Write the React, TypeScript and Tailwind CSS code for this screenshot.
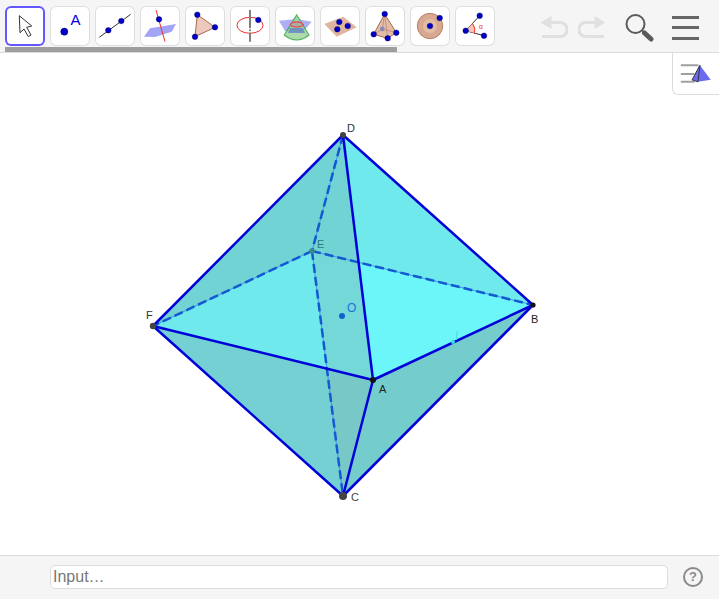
// Octahedron applet view: tool strip, 3D graphics view and input bar.

import type { ReactNode } from "react";

const BLUE = "#0000d8";
const DOT = "#0000c8";
const HIDDEN = "#1458d2";

// ---------------------------------------------------------------------------
// Toolbar icons
// ---------------------------------------------------------------------------

function Pt({ x, y, r = 2.8 }: { x: number; y: number; r?: number }) {
  return <circle cx={x} cy={y} r={r} fill={DOT} stroke="#000050" strokeWidth="0.4" />;
}

const toolIcons: ReactNode[] = [
  <path
    d="M14.3 9.7 L15 26.7 L19 23 L23.3 30.6 L26 29 L21.7 21.3 L26.7 20 Z"
    fill="#fff"
    stroke="#333"
    strokeWidth="1"
  />,
  <>
    <circle cx="14.3" cy="25.7" r="3.6" fill={DOT} stroke="#000050" strokeWidth="0.4" />
    <text x="20.5" y="19" fontSize="15" fill="#0000e0" fontFamily="Liberation Sans, sans-serif">
      A
    </text>
  </>,
  <>
    <path d="M4.3 31.3 L35.7 8.3" stroke="#333" strokeWidth="1" />
    <Pt x={13.3} y={24.3} />
    <Pt x={26.3} y={15} />
  </>,
  <>
    <path d="M4 30.7 L10 22.3 L36 18 L31.7 25.7 L15 31 Z" fill="#9a9af5" opacity="0.9" />
    <path d="M16 4 L25 35.7" stroke="#f03030" strokeWidth="1" />
    <Pt x={19} y={13.3} />
  </>,
  <>
    <path d="M12.3 8.7 L30 21.3 L10 30.7 Z" fill="#ecc9ba" stroke="#a86850" strokeWidth="1" />
    <Pt x={12.3} y={8.7} />
    <Pt x={30} y={21.3} />
    <Pt x={10} y={30.7} />
  </>,
  <>
    <ellipse cx="20" cy="19.3" rx="13" ry="8" fill="none" stroke="#f03030" strokeWidth="1" />
    <path d="M20 4 L20 35.7" stroke="#808080" strokeWidth="2" />
    <path d="M20 22 L20 28" stroke="#e8e8e8" strokeWidth="2" strokeDasharray="1.5 1.5" />
    <Pt x={28.3} y={14} />
  </>,
  <>
    <path d="M4 14.7 L22 13 L36.7 15.7 L27 27 L10 25 Z" fill="#9a9af5" opacity="0.8" />
    <path d="M21.7 9 L34 29 Q21.7 39 9.3 29 Z" fill="#9fd49f" opacity="0.85" stroke="#30a840" strokeWidth="1.2" />
    <path d="M15 22 L28 22 L30 27 L13 27 Z" fill="#5a7ac8" opacity="0.7" />
    <path d="M17 15 L26 15 L28 21 L15 21 Z" fill="#b0a8a0" opacity="0.9" />
    <ellipse cx="21.7" cy="18.5" rx="6.5" ry="2.5" fill="none" stroke="#f03030" strokeWidth="1" />
  </>,
  <>
    <path d="M4.3 18 L23.3 10.7 L36.7 21.3 L16.7 30.7 Z" fill="#d8a890" opacity="0.85" />
    <Pt x={19.3} y={16} />
    <Pt x={27.7} y={20} />
    <Pt x={17.3} y={23.3} />
  </>,
  <>
    <path d="M19.7 8 L8.7 28.3 L22.7 32.3 L31.3 26.7 Z" fill="#e4bda8" stroke="#a86850" strokeWidth="1" />
    <path d="M19.7 8 L22.7 32.3 M19.7 8 L17.3 23 M8.7 28.3 L17.3 23 L31.3 26.7" stroke="#b88068" strokeWidth="0.7" fill="none" />
    <circle cx="17.3" cy="23" r="2.4" fill="#8a8ab8" />
    <Pt x={19.7} y={8} />
    <Pt x={8.7} y={28.3} />
    <Pt x={22.7} y={32.3} />
    <Pt x={31.3} y={26.7} />
  </>,
  <>
    <circle cx="20" cy="20" r="12.7" fill="#d8a890" stroke="#b88068" strokeWidth="1" />
    <circle cx="20" cy="20" r="7" fill="#e8c4b0" opacity="0.7" />
    <Pt x={20} y={20} />
    <Pt x={29.7} y={12} />
  </>,
  <>
    <path d="M10.7 24.7 L24.7 9.7 M10.7 24.7 L29 29.7" stroke="#333" strokeWidth="1" fill="none" />
    <path d="M10.7 24.7 L17.5 17.5 Q21 22 19.5 27 Z" fill="#f4c4b4" />
    <path d="M17.5 17.5 Q21 22 19.5 27" fill="none" stroke="#f03030" strokeWidth="1" />
    <text x="23.8" y="22.5" fontSize="7" fill="#f03030" fontFamily="Liberation Sans, sans-serif">
      α
    </text>
    <Pt x={10.7} y={24.7} />
    <Pt x={24.7} y={9.7} />
    <Pt x={29} y={29.7} />
  </>,
];

function ToolButton({ active, children }: { active?: boolean; children: ReactNode }) {
  return (
    <div
      className={
        active
          ? "h-10 w-10 flex-none rounded-[6px] bg-white ring-2 ring-inset ring-[#6557ff]"
          : "h-10 w-10 flex-none rounded-[6px] bg-white ring-1 ring-inset ring-[#dedede]"
      }
    >
      <svg viewBox="0 0 40 40" className="h-10 w-10">
        {children}
      </svg>
    </div>
  );
}

function UndoIcon({ flip }: { flip?: boolean }) {
  return (
    <svg viewBox="0 0 28 24" className={flip ? "h-6 w-7 -scale-x-100" : "h-6 w-7"}>
      <path d="M6 7.5 H19 Q27 7.5 27 14.5 Q27 21.5 19 21.5 H2" fill="none" stroke="#e0e0e0" strokeWidth="3" />
      <path d="M0.5 7.5 L11.5 1 L11.5 14 Z" fill="#e0e0e0" />
    </svg>
  );
}

function SearchIcon() {
  return (
    <svg viewBox="0 0 30 30" className="h-[30px] w-[30px]">
      <circle cx="11.5" cy="11" r="9" fill="none" stroke="#5a5a5a" strokeWidth="2" />
      <path d="M18.5 18 L20 19.5" stroke="#5a5a5a" strokeWidth="2" />
      <path d="M20.5 20 L27 26" stroke="#5a5a5a" strokeWidth="5" strokeLinecap="round" />
    </svg>
  );
}

function MenuIcon() {
  return (
    <div className="flex w-[27px] flex-col gap-[7.5px]">
      <div className="h-[3px] bg-[#666666]" />
      <div className="h-[3px] bg-[#666666]" />
      <div className="h-[3px] bg-[#666666]" />
    </div>
  );
}

// ---------------------------------------------------------------------------
// Octahedron drawing
// ---------------------------------------------------------------------------

function Octahedron() {
  const D = "343,135";
  const B = "533,305";
  const A = "373,380";
  const C = "343,496";
  const F = "153,326";
  const E = "312,251";
  const bright = "#6fe9ec";
  const dark = "#72d3d4";

  const hidden = [
    [343, 135, 312, 251],
    [312, 251, 153, 326],
    [312, 251, 533, 305],
    [312, 251, 343, 496],
  ];
  const edges = [
    [343, 135, 153, 326],
    [343, 135, 533, 305],
    [343, 135, 373, 380],
    [153, 326, 373, 380],
    [373, 380, 533, 305],
    [373, 380, 343, 496],
    [533, 305, 343, 496],
    [343, 496, 153, 326],
  ];

  return (
    <svg viewBox="0 53 719 502" className="block h-full w-full" fontFamily="Liberation Sans, sans-serif">
      {/* Faces */}
      <polygon points={`${D} ${B} ${C} ${F}`} fill={dark} />
      <polygon points={`${D} ${B} ${A}`} fill={bright} />
      <polygon points={`${E} ${B} ${A}`} fill="#6cf6f9" />
      <polygon points={`${F} ${E} 327,371`} fill={bright} />
      <polygon points={`${E} 358,262 ${A} 327,371`} fill="#74d8d9" />
      <polygon points={`${A} ${B} ${C}`} fill="#74cccc" />
      <polygon points={`${F} ${A} ${C}`} fill="#74d0d2" />
      <polygon points={`327,371 ${A} ${C} 342,490`} fill="#78c8c8" />

      {/* Hidden edges */}
      {hidden.map(([x1, y1, x2, y2]) => (
        <g key={`${x1}-${x2}-${y2}`}>
          <line x1={x1} y1={y1} x2={x2} y2={y2} stroke="#3c96e4" strokeWidth="1" />
          <line x1={x1} y1={y1} x2={x2} y2={y2} stroke={HIDDEN} strokeWidth="2.5" strokeDasharray="9 4" />
        </g>
      ))}

      {/* Visible edges */}
      {edges.map(([x1, y1, x2, y2]) => (
        <line key={`${x1}-${x2}-${y2}`} x1={x1} y1={y1} x2={x2} y2={y2} stroke={BLUE} strokeWidth="2.5" />
      ))}

      {/* Small mark on AB */}
      <path d="M457 331 L456.5 340" stroke="#40dce0" strokeWidth="1" />
      <circle cx="453" cy="342" r="2" fill="#30e0e8" />

      {/* Vertices */}
      <circle cx="343" cy="135" r="3" fill="#444444" />
      <circle cx="533" cy="305" r="2.6" fill="#111111" />
      <circle cx="373" cy="380" r="3" fill="#111111" />
      <circle cx="343" cy="496" r="4" fill="#444444" />
      <circle cx="153" cy="326" r="3.2" fill="#444444" />
      <circle cx="312" cy="251" r="2.8" fill="#3a8a8c" />
      <circle cx="342" cy="316" r="3" fill="#1060d0" />

      {/* Labels */}
      <text x="347" y="132" fontSize="11" fill="#333333">D</text>
      <text x="317" y="248" fontSize="11" fill="#2a7a78">E</text>
      <text x="347" y="312" fontSize="12" fill="#2070e0">O</text>
      <text x="531" y="323" fontSize="11" fill="#222222">B</text>
      <text x="379" y="393" fontSize="11" fill="#222222">A</text>
      <text x="351" y="501" fontSize="11" fill="#444444">C</text>
      <text x="146" y="319" fontSize="11" fill="#333333">F</text>
    </svg>
  );
}

// ---------------------------------------------------------------------------
// App
// ---------------------------------------------------------------------------

export default function App() {
  return (
    <div
      className="flex h-[599px] w-[719px] flex-col bg-white"
      style={{ fontFamily: '"Liberation Sans", sans-serif' }}
    >
      {/* Toolbar */}
      <div className="h-[53px] flex-none border-b border-[#dcdcdc] bg-[#f5f5f5]">
        <div className="flex items-start pl-[5px] pt-[6px]">
          <div className="flex gap-[5px]">
            {toolIcons.map((icon, i) => (
              <ToolButton key={i} active={i === 0}>
                {icon}
              </ToolButton>
            ))}
          </div>
          <div className="ml-[45px] mt-[9px]">
            <UndoIcon />
          </div>
          <div className="ml-[10px] mt-[9px]">
            <UndoIcon flip />
          </div>
          <div className="ml-[18px] mt-[7px]">
            <SearchIcon />
          </div>
          <div className="ml-[18px] mt-[9.5px]">
            <MenuIcon />
          </div>
        </div>
        <div className="ml-[5px] mt-px h-[5px] w-[392px] bg-[#9e9e9e]" />
      </div>

      {/* Graphics view */}
      <div className="relative min-h-0 flex-1">
        <Octahedron />
        <div className="absolute right-0 top-0 flex h-[42px] w-[47px] items-start rounded-bl-[6px] border-b border-l border-[#dcdcdc] bg-white">
          <svg viewBox="0 0 47 42" className="h-[42px] w-[47px]">
            <path d="M8 12 H26 M8 21 H22 M8 29 H22" stroke="#a0a0a0" strokeWidth="2" />
            <path d="M27.5 12 L19.5 27 L25.5 29 L38.5 27 Z" fill="#6a6af0" />
            <path d="M27.5 12 L25.5 29 M27.5 12 L19.5 27 L25.5 29" fill="none" stroke="#333" strokeWidth="1" />
          </svg>
        </div>
      </div>

      {/* Input bar */}
      <div className="flex h-[44px] flex-none items-center border-t border-[#dcdcdc] bg-[#f5f5f5] pb-px pl-[50px]">
        <div className="flex h-6 w-[618px] items-center rounded-[5px] border border-[#dcdcdc] bg-white pl-[2px] text-base text-[#777777]">
          Input…
        </div>
        <div className="ml-[15px] flex h-5 w-5 items-center justify-center rounded-full border-2 border-[#8a8a8a] text-[13px] font-bold text-[#8a8a8a]">
          ?
        </div>
      </div>
    </div>
  );
}
